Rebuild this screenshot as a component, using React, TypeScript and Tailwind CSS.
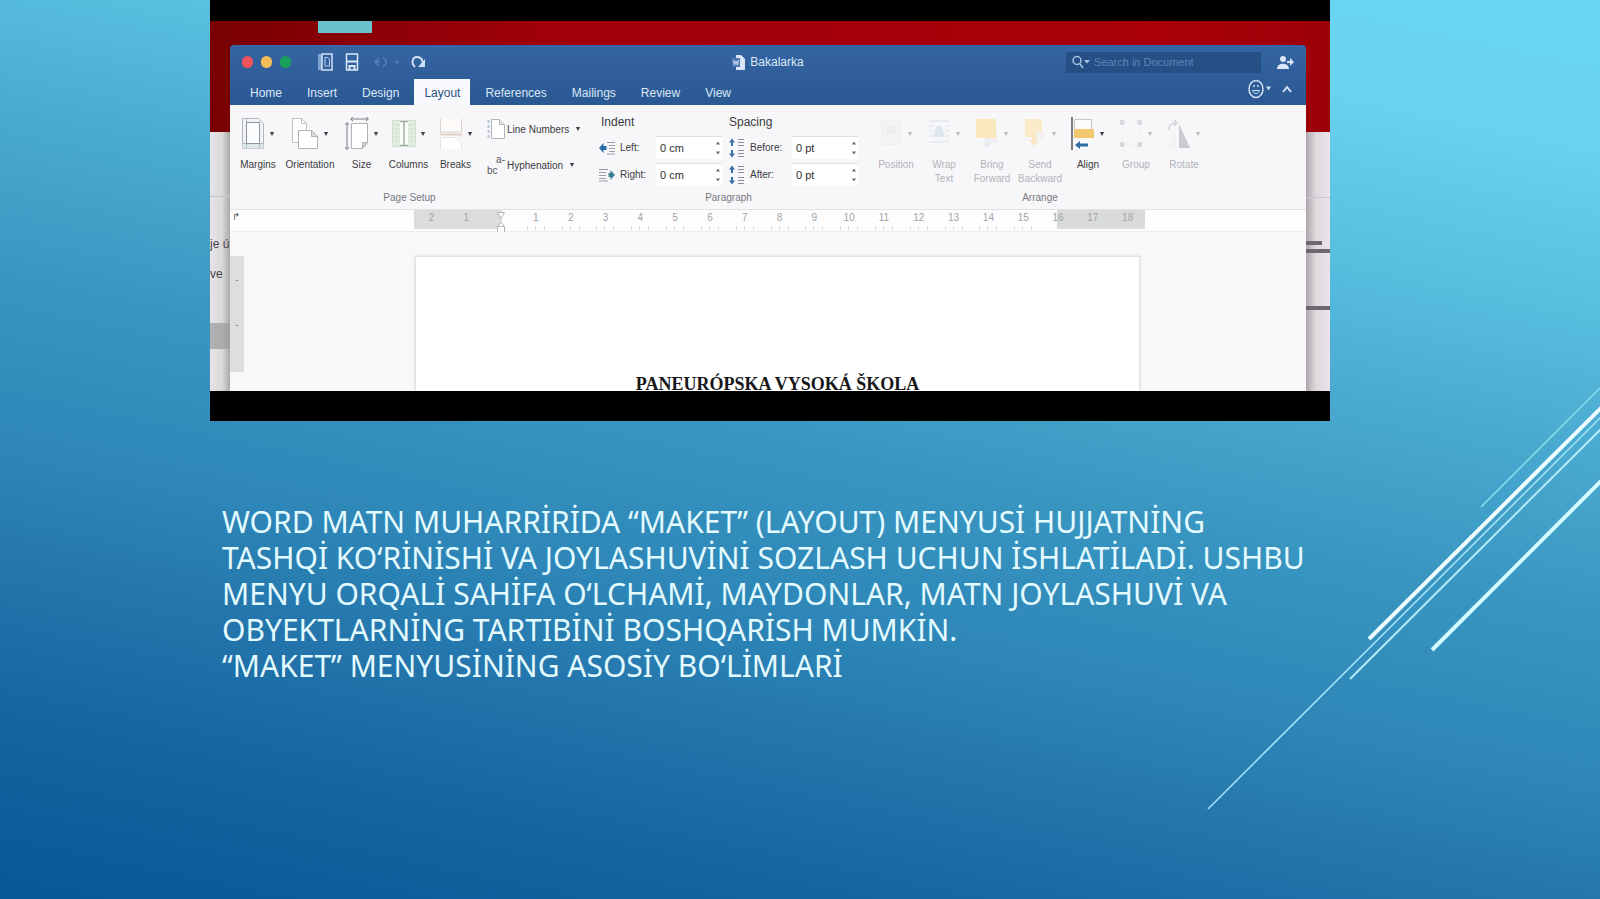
import React from "react";

const TABS = ["Home", "Insert", "Design", "Layout", "References", "Mailings", "Review", "View"];

const RULER = ["2", "1", "", "1", "2", "3", "4", "5", "6", "7", "8", "9", "10", "11", "12", "13", "14", "15", "16", "17", "18"];

function Caret({ faint = false }: { faint?: boolean }) {
  return (
    <svg viewBox="0 0 6 6" className={faint ? "h-[6px] w-[6px] text-[#bdbdc2]" : "h-[6px] w-[6px] text-[#44444a]"}>
      <path d="M0.8 1h4.4L3 5z" fill="currentColor" />
    </svg>
  );
}

function MarginsIcon() {
  return (
    <svg viewBox="0 0 24 33" className="h-[33px] w-6" fill="none">
      <path d="M1.5 1.5h16l5 5v25h-21z" fill="#f1f3f5" stroke="#b4b8bd" />
      <path d="M1.5 26.5h21v5h-21z" fill="#dfe7ea" />
      <path d="M5.5 1.5v30M18.5 4v27.5M1.5 26.5h21" stroke="#a9bdc4" />
      <path d="M5.5 5.5h13v21h-13z" fill="#fbfcfd" stroke="#8f949b" />
    </svg>
  );
}

function OrientationIcon() {
  return (
    <svg viewBox="0 0 28 33" className="h-[33px] w-7" fill="none">
      <path d="M1.5 1.5h9l5 5v19h-14z" fill="#fff" stroke="#c0c0c4" />
      <path d="M10.5 1.5v5h5" stroke="#c0c0c4" />
      <path d="M7.5 13.5h13l6 6v12h-19z" fill="#fff" stroke="#b0b0b5" />
      <path d="M20.5 13.5v6h6z" fill="#dcdce0" stroke="#b0b0b5" />
    </svg>
  );
}

function SizeIcon() {
  return (
    <svg viewBox="0 0 24 33" className="h-[33px] w-6" fill="none">
      <path d="M6.5 6.5h16v19l-5 6h-11z" fill="#fff" stroke="#b2b2b7" />
      <path d="M22.5 25.5h-5v6z" fill="#d4d4d8" stroke="#b2b2b7" />
      <path d="M6 2h17M2 6v26" stroke="#7b7f86" />
      <path d="M8 0L5.5 2 8 4M21 0l2.5 2L21 4M0 8l2-2.5L4 8M0 30l2 2.5L4 30" stroke="#7b7f86" />
    </svg>
  );
}

function ColumnsIcon() {
  return (
    <svg viewBox="0 0 24 33" className="h-[33px] w-6" fill="none">
      <path d="M0.5 3.5h23v26h-23z" fill="#e0ede0" stroke="#d0decf" />
      <path d="M8 3.5h8v26H8z" fill="#fbfdfb" />
      <path d="M12 5v23M8 4.5h8M8 28.5h8" stroke="#a3aea4" strokeWidth="1.5" />
      <path d="M3 8h4M3 12h4M3 16h4M3 20h4M3 24h4M17 8h4M17 12h4M17 16h4M17 20h4M17 24h4" stroke="#c8dac8" />
    </svg>
  );
}

function BreaksIcon() {
  return (
    <svg viewBox="0 0 24 33" className="h-[33px] w-6" fill="none">
      <path d="M1.5 2v13h21V2" fill="#fdfaf8" stroke="#d6d3d3" />
      <path d="M1.5 32V20.5h15l6 5V32" fill="#fff" stroke="#e6e4e4" />
      <path d="M1 17.5h22" stroke="#e3cfc4" strokeWidth="2" />
    </svg>
  );
}

function LineNumbersIcon() {
  return (
    <svg viewBox="0 0 18 22" className="h-[22px] w-[18px]" fill="none">
      <path d="M4.5 1.5h8l5 5v14h-13z" fill="#fff" stroke="#b4b5ba" />
      <path d="M12.5 1.5v5h5" fill="#e6e6ea" stroke="#b4b5ba" />
      <path d="M1.5 2v18" stroke="#b5c5d2" strokeWidth="2" strokeDasharray="3 2" />
    </svg>
  );
}

function HyphenationIcon() {
  return (
    <span className="grid h-[22px] w-[18px] grid-cols-1 text-[10px] leading-[11px] text-[#55555b]">
      <span className="text-right">a-</span>
      <span className="text-left">bc</span>
    </span>
  );
}

function IndentIcon({ side }: { side: "left" | "right" }) {
  return side === "left" ? (
    <svg viewBox="0 0 16 14" className="h-[14px] w-4" fill="none">
      <path d="M0 7l4.5-5v3h3v4h-3v3z" fill="#2b6cae" />
      <path d="M8 1.5h8M10 4.5h6M10 7.5h6M10 10.5h6M8 13h8" stroke="#9a9ea5" />
    </svg>
  ) : (
    <svg viewBox="0 0 16 14" className="h-[14px] w-4" fill="none">
      <path d="M16 7l-4.5-5v3h-2v4h2v3z" fill="#3c8096" />
      <path d="M0 1.5h9M0 4.5h7M0 7.5h7M0 10.5h7M0 13h9" stroke="#9a9ea5" />
    </svg>
  );
}

function SpacingIcon() {
  return (
    <svg viewBox="0 0 16 20" className="h-5 w-4" fill="none">
      <path d="M3 0.5L6 4.5H4V8H2V4.5H0z" fill="#3a6fa6" />
      <path d="M3 19.5L0 15.5h2V12h2v3.500h2z" fill="#3a6fa6" />
      <path d="M9 1.5h6M9 4.5h6M9 7.5h6M9 12.500h6M9 15.500h6M9 18.500h6" stroke="#8c9099" />
    </svg>
  );
}

function PositionIcon() {
  return (
    <svg viewBox="0 0 24 33" className="h-[33px] w-6" fill="none">
      <path d="M2.5 3.5h19v24h-19z" fill="#f3f3f4" stroke="#efeff1" />
      <path d="M8 9h8v8H8z" fill="#ededf0" />
    </svg>
  );
}

function WrapIcon() {
  return (
    <svg viewBox="0 0 24 33" className="h-[33px] w-6" fill="none">
      <path d="M2 4h20M2 9h4M18 9h4M2 14h4M18 14h4M2 19h4M18 19h4M2 25h20" stroke="#e9ecee" strokeWidth="2" />
      <path d="M7 20c0-15 10-15 10 0z" fill="#dde8ec" />
    </svg>
  );
}

function BringIcon() {
  return (
    <svg viewBox="0 0 24 33" className="h-[33px] w-6" fill="none">
      <path d="M9 14h14v12H9z" fill="#f1f1f2" />
      <path d="M1 2h20v19H1z" fill="#f9e9bd" />
      <path d="M12 31l-5-5h3v-4h4v4h3z" fill="#e8edf1" />
    </svg>
  );
}

function SendIcon() {
  return (
    <svg viewBox="0 0 24 33" className="h-[33px] w-6" fill="none">
      <path d="M2 2h17v18H2z" fill="#f9ebc6" />
      <path d="M13 14h8v8h-8z" fill="#f3f1ec" />
      <path d="M11 29l-5-6h3v-6h4v6h3z" fill="#f6e6c2" />
    </svg>
  );
}

function AlignIcon() {
  return (
    <svg viewBox="0 0 24 33" className="h-[33px] w-6" fill="none">
      <path d="M3.5 2.5h17v10h-17z" fill="#fbfbfc" stroke="#c6c7cb" />
      <path d="M3 12h20v9H3z" fill="#f2c970" />
      <path d="M1 0v33" stroke="#54545c" strokeWidth="1.5" />
      <path d="M4 28l5-4v2.5h8v3H9V32z" fill="#2e6ca4" />
    </svg>
  );
}

function GroupIcon() {
  return (
    <svg viewBox="0 0 26 33" className="h-[33px] w-6" fill="none">
      <path d="M3.5 4.5h19v24h-19z" stroke="#ebebee" strokeDasharray="2 2" />
      <path d="M1 2h5v5H1zM20 2h5v5h-5zM1 26h5v5H1zM20 26h5v5h-5z" fill="#d8d8dc" />
    </svg>
  );
}

function RotateIcon() {
  return (
    <svg viewBox="0 0 24 33" className="h-[33px] w-6" fill="none">
      <path d="M12 7v24h11z" fill="#cbcbcf" />
      <path d="M9 14v17H1z" fill="#f3f3f5" />
      <path d="M2 13c0-5 3-7 7-7M7 3l3 3-3 3" stroke="#d6d6da" strokeWidth="1.5" />
    </svg>
  );
}

function BigButton({ label, width, icon, faint = false }: { label: string; width: string; icon: React.ReactNode; faint?: boolean }) {
  return (
    <button type="button" className={`flex flex-col items-center ${width}`}>
      <span className="flex items-center gap-1">
        {icon}
        <Caret faint={faint} />
      </span>
      <span className={faint ? "mt-2 text-[10px] leading-[14px] text-[#b3b3b8]" : "mt-2 text-[10px] leading-[14px] text-[#3b3b40]"}>{label}</span>
    </button>
  );
}

function SmallButton({ label, icon }: { label: string; icon: React.ReactNode }) {
  return (
    <button type="button" className="flex h-6 items-center gap-[2px] text-[10px] text-[#3b3b40]">
      {icon}
      <span>{label}</span>
      <span className="pl-1">
        <Caret />
      </span>
    </button>
  );
}

function Stepper({ id, label, value, icon, labelWidth }: { id: string; label: string; value: string; icon: React.ReactNode; labelWidth: string }) {
  return (
    <div className="flex h-[27px] items-center">
      {icon}
      <label htmlFor={id} className={`ml-[5px] text-[10px] text-[#3b3b40] ${labelWidth}`}>
        {label}
      </label>
      <input id={id} defaultValue={value} className="h-[23px] w-[58px] border-t border-[#dedee2] bg-white pl-1 text-[11px] text-[#2e2e33] outline-none" />
      <span className="flex h-[23px] w-2 flex-col items-center justify-between border-t border-[#dedee2] bg-white py-1">
        <svg viewBox="0 0 4 4" className="h-1 w-1"><path d="M2 0.5L4 3.5H0z" fill="#66666c" /></svg>
        <svg viewBox="0 0 4 4" className="h-1 w-1"><path d="M2 3.5L0 0.5h4z" fill="#66666c" /></svg>
      </span>
    </div>
  );
}

function Group({ name, children }: { name: string; children: React.ReactNode }) {
  return (
    <section aria-label={name} className="flex h-full flex-col">
      <div className="flex h-[86px] items-start">{children}</div>
      <div className="text-center text-[10px] leading-[14px] text-[#77777d]">{name}</div>
    </section>
  );
}

function TitleBar() {
  return (
    <div className="grid h-[34px] grid-cols-[1fr_auto_1fr] items-center px-3">
      <div className="flex items-center">
        <div className="flex gap-2">
          <button type="button" aria-label="Close" className="h-3 w-[11px] rounded-full bg-[#f0525a]" />
          <button type="button" aria-label="Minimize" className="h-3 w-[11px] rounded-full bg-[#f3bd57]" />
          <button type="button" aria-label="Zoom" className="h-3 w-[11px] rounded-full bg-[#1aa05a]" />
        </div>
        <button type="button" aria-label="Sidebar" className="ml-[26px]">
          <svg viewBox="0 0 16 18" className="h-[18px] w-4" fill="none">
            <path d="M1 1h4v16H1z" fill="#7fa3d2" />
            <path d="M5 1h10v16H5z" stroke="#cfe0f4" strokeWidth="1.5" />
            <path d="M8 4.5h2.500l2 2V13H8z" stroke="#b9cfea" />
          </svg>
        </button>
        <button type="button" aria-label="Save" className="ml-3">
          <svg viewBox="0 0 14 18" className="h-[18px] w-[14px]" fill="none">
            <path d="M1.5 1h11v16h-11z" stroke="#dbe8f8" strokeWidth="1.5" />
            <path d="M1.5 8.5h11M4.5 17v-4h5v4" stroke="#dbe8f8" strokeWidth="2" />
          </svg>
        </button>
        <button type="button" aria-label="Undo" className="ml-[14px]">
          <svg viewBox="0 0 26 14" className="h-[14px] w-[26px]" fill="none" stroke="#5580b6" strokeWidth="1.5">
            <path d="M6 3L2 7l4 4M2 7h5M10 3c4 1 4 7 0 8M22 6l2 2 1.5-2" />
          </svg>
        </button>
        <button type="button" aria-label="Repeat" className="ml-3">
          <svg viewBox="0 0 15 14" className="h-[14px] w-[15px]" fill="none" stroke="#cfe0f4" strokeWidth="2">
            <path d="M4 12C0 9 1 2 6 2c4 0 6 3 6 8" />
            <path d="M14 4v8H7z" fill="#cfe0f4" stroke="none" />
          </svg>
        </button>
      </div>
      <div className="flex items-center gap-1 text-xs text-[#dce8f7]">
        <svg viewBox="0 0 14 17" className="h-[17px] w-[14px]" fill="none">
          <path d="M4 1h5l4 4v11H4z" fill="#dbe7f6" />
          <path d="M0 4h8v9H0z" fill="#4d79b2" />
          <path d="M1.5 6l1 5L4 7l1.5 4 1-5" stroke="#dbe7f6" />
        </svg>
        <h2>Bakalarka</h2>
      </div>
      <div className="flex items-center justify-end">
        <label className="flex h-[21px] w-[195px] items-center gap-1 bg-[#264f86] px-[6px]">
          <svg viewBox="0 0 18 14" className="h-[14px] w-[18px] shrink-0" fill="none">
            <circle cx="5" cy="5.5" r="4" stroke="#a9c3e4" strokeWidth="1.5" />
            <path d="M8 9l3 4" stroke="#a9c3e4" strokeWidth="1.5" />
            <path d="M12 5h6l-3 3.5z" fill="#a9c3e4" />
          </svg>
          <input aria-label="Search in Document" placeholder="Search in Document" className="min-w-0 flex-1 bg-transparent text-[11px] text-[#c9d9ee] outline-none placeholder:text-[#5f86b7]" />
        </label>
        <button type="button" aria-label="Share" className="ml-4">
          <svg viewBox="0 0 17 15" className="h-[15px] w-[17px]" fill="#dbe7f6">
            <circle cx="6" cy="4" r="3" />
            <path d="M0 14c0-7 12-7 12 0zM10 6h3V3l4 4-4 4V8h-3z" />
          </svg>
        </button>
      </div>
    </div>
  );
}

function TabRow() {
  return (
    <div className="flex h-[26px] items-stretch justify-between pl-[10px] pr-[14px]">
      <nav className="flex gap-[5px]">
        {TABS.map((tab) => (
          <button
            key={tab}
            type="button"
            className={tab === "Layout" ? "bg-[#f8f9fc] px-[10px] pt-[2px] text-xs text-[#2d4f80]" : "px-[10px] pt-[2px] text-xs text-[#dbe7f6]"}
          >
            {tab}
          </button>
        ))}
      </nav>
      <div className="flex items-start gap-[10px]">
        <button type="button" aria-label="Feedback">
          <svg viewBox="0 0 24 20" className="h-5 w-6" fill="none" stroke="#cfe0f4">
            <ellipse cx="8" cy="10" rx="7" ry="8.5" strokeWidth="1.5" />
            <path d="M4.5 11.5c1 4 6 4 7 0z" />
            <path d="M6 6v2M10 6v2" strokeWidth="1.5" />
            <path d="M18 7.5h5l-2.5 4z" fill="#cfe0f4" stroke="none" />
          </svg>
        </button>
        <button type="button" aria-label="Collapse ribbon" className="mt-[6px]">
          <svg viewBox="0 0 10 8" className="h-2 w-[10px]" fill="none" stroke="#cfe0f4" strokeWidth="2">
            <path d="M1 7l4-5 4 5" />
          </svg>
        </button>
      </div>
    </div>
  );
}

function Ribbon() {
  return (
    <div className="flex h-[105px] overflow-hidden border-b border-[#e2e2e6] bg-[#f7f7fa] pl-1">
      <Group name="Page Setup">
        <div className="flex pt-3">
          <BigButton label="Margins" width="w-12" icon={<MarginsIcon />} />
          <BigButton label="Orientation" width="w-14" icon={<OrientationIcon />} />
          <BigButton label="Size" width="w-[47px]" icon={<SizeIcon />} />
          <BigButton label="Columns" width="w-[47px]" icon={<ColumnsIcon />} />
          <BigButton label="Breaks" width="w-[47px]" icon={<BreaksIcon />} />
        </div>
        <div className="ml-2 flex w-[98px] flex-col gap-3 pt-3">
          <SmallButton label="Line Numbers" icon={<LineNumbersIcon />} />
          <SmallButton label="Hyphenation" icon={<HyphenationIcon />} />
        </div>
      </Group>
      <div className="ml-[14px]">
        <Group name="Paragraph">
          <fieldset className="pt-[9px]">
            <legend className="contents text-xs text-[#3b3b40]">
              <span className="block pl-[2px] text-xs leading-4">Indent</span>
            </legend>
            <div className="pt-1">
              <Stepper id="indent-left" label="Left:" value="0 cm" icon={<IndentIcon side="left" />} labelWidth="w-9" />
              <Stepper id="indent-right" label="Right:" value="0 cm" icon={<IndentIcon side="right" />} labelWidth="w-9" />
            </div>
          </fieldset>
          <fieldset className="ml-[7px] pt-[9px]">
            <legend className="contents text-xs text-[#3b3b40]">
              <span className="block text-xs leading-4">Spacing</span>
            </legend>
            <div className="pt-1">
              <Stepper id="space-before" label="Before:" value="0 pt" icon={<SpacingIcon />} labelWidth="w-[42px]" />
              <Stepper id="space-after" label="After:" value="0 pt" icon={<SpacingIcon />} labelWidth="w-[42px]" />
            </div>
          </fieldset>
        </Group>
      </div>
      <div className="ml-[14px]">
        <Group name="Arrange">
          <div className="flex items-start pt-3">
            <BigButton label="Position" width="w-12" icon={<PositionIcon />} faint />
            <BigButton label="Wrap Text" width="w-12 px-1" icon={<WrapIcon />} faint />
            <BigButton label="Bring Forward" width="w-12" icon={<BringIcon />} faint />
            <BigButton label="Send Backward" width="w-12" icon={<SendIcon />} faint />
            <BigButton label="Align" width="w-12" icon={<AlignIcon />} />
            <BigButton label="Group" width="w-12" icon={<GroupIcon />} faint />
            <BigButton label="Rotate" width="w-12" icon={<RotateIcon />} faint />
          </div>
        </Group>
      </div>
    </div>
  );
}

function Ruler() {
  return (
    <div className="flex h-[22px] items-start border-b border-[#ededf0] bg-[#fdfdfe]">
      <div className="w-[184px] pl-[2px] text-[10px] leading-[14px] text-[#66666c]">↱</div>
      <div className="flex h-[19px] w-[731px] bg-[linear-gradient(90deg,#dcdcdd_12%,#fdfdfe_12%_88%,#d9dbda_88%)]">
        {RULER.map((n, i) => (
          <div key={i} className="flex flex-1 flex-col items-center text-[10px] leading-4 text-[#a2a2a7]">
            {n === "" ? (
              <svg viewBox="0 0 10 24" className="h-6 w-[10px] shrink-0" fill="#fff" stroke="#b4b4b8">
                <path d="M1.5 2.5h7l-3.5 6zM1.5 16.5l3.5-4 3.5 4zM1.5 16.5h7v6h-7z" />
              </svg>
            ) : (
              n
            )}
            {i > 2 && i < 18 && (
              <svg viewBox="0 0 34 4" className="h-1 w-[34px] shrink-0" stroke="#dcdce0">
                <path d="M8.5 0v4M16.5 0v4M25.5 0v4" />
              </svg>
            )}
          </div>
        ))}
      </div>
    </div>
  );
}

function DocumentArea() {
  return (
    <div className="flex min-h-0 flex-1 bg-[#f9f7fa] pt-6">
      <div className="flex h-[116px] w-[14px] flex-col items-center gap-[37px] bg-[#dddedd] pt-5 text-[10px] leading-[8px] text-[#8a8a8f]">
        <span>-</span>
        <span>-</span>
      </div>
      <div className="ml-[171px] w-[725px] overflow-hidden border-x border-t border-[#e2e1e3] bg-white shadow-[0_0_3px_#d8d8da]">
        <h3 className="pt-[113px] text-center font-['Liberation_Serif',serif] text-lg font-bold whitespace-nowrap text-[#17171a]">
          PANEURÓPSKA VYSOKÁ ŠKOLA
        </h3>
      </div>
    </div>
  );
}

function LeftBackdrop() {
  return (
    <div className="w-5 overflow-hidden pt-[111px]">
      <div className="flex h-full flex-col bg-[linear-gradient(90deg,#e9e3e9,#d9d9d8_60%,#a9aaa8)] text-xs leading-4 text-[#4c4350]">
        <div className="h-[65px] shrink-0 border-b border-[#c4c4c4]" />
        <div className="mt-[39px] whitespace-nowrap">je ú</div>
        <div className="mt-[14px]">ve</div>
        <div className="mt-[41px] h-[26px] bg-[#98989a] opacity-70" />
      </div>
    </div>
  );
}

function RightBackdrop() {
  return (
    <div className="w-6 overflow-hidden pt-[111px]">
      <div className="flex h-full flex-col bg-[linear-gradient(90deg,#aaa6ab,#dcd9dc_40%,#ebe3ee)]">
        <div className="h-[66px] shrink-0 border-b border-[#c8c6ca]" />
        <div className="mt-[43px] h-1 w-4 bg-[#6d676f]" />
        <div className="mt-1 h-1 bg-[#6d676f]" />
        <div className="mt-[53px] h-1 bg-[#6d676f]" />
      </div>
    </div>
  );
}

function WordFigure() {
  return (
    <figure className="ml-[13.125%] w-[70%] overflow-hidden bg-black pt-[21px] pb-[30px]">
      <div className="relative flex h-[370px] bg-[linear-gradient(90deg,#780003,#a00009_30%,#a90009_85%,#9c0006)]">
        <div className="absolute top-0 left-[108px] h-3 w-[54px] bg-[#68c3cf]" />
        <LeftBackdrop />
        <div className="mt-6 flex min-w-0 flex-1 flex-col overflow-hidden rounded-t-[4px]">
          <header className="bg-[linear-gradient(180deg,#3565a2,#2a5893)]">
            <TitleBar />
            <TabRow />
          </header>
          <Ribbon />
          <Ruler />
          <DocumentArea />
        </div>
        <RightBackdrop />
      </div>
    </figure>
  );
}

function Streaks() {
  return (
    <svg viewBox="0 0 400 430" className="pointer-events-none absolute top-[385px] right-0 h-[430px] w-[400px]" fill="none">
      <path d="M281 122L402 1" stroke="#8fe0f2" strokeWidth="1.5" />
      <path d="M169 254L402 22" stroke="#ecfcff" strokeWidth="4" />
      <path d="M8 424L402 31" stroke="#a5e4f8" strokeWidth="1.5" />
      <path d="M150 294L402 43" stroke="#b4ecfa" strokeWidth="2" />
      <path d="M232 265L402 95" stroke="#d2fbfd" strokeWidth="4" />
    </svg>
  );
}

export default function App() {
  return (
    <main className="relative min-h-screen overflow-hidden bg-[linear-gradient(192deg,#68d7f3_0%,#69d2ef_12%,#58bfdf_25%,#4aabd0_36%,#3895c0_50%,#2d86b7_64%,#2476ac_73%,#1466a0_85%,#065896_100%)] font-['Liberation_Sans',Arial,sans-serif]">
      <WordFigure />
      <Streaks />
      <p className="mt-[83px] ml-[222px] w-[1096px] max-w-full font-['Noto_Sans',sans-serif] text-[30px] leading-9 text-[#e3faff]">
        WORD MATN MUHARRİRİDA “MAKET” (LAYOUT) MENYUSİ HUJJATNİNG TASHQİ KO‘RİNİSHİ VA JOYLASHUVİNİ SOZLASH UCHUN İSHLATİLADİ. USHBU MENYU ORQALİ SAHİFA O‘LCHAMİ, MAYDONLAR, MATN JOYLASHUVİ VA OBYEKTLARNİNG TARTIBİNİ BOSHQARİSH MUMKİN.
        <br />
        “MAKET” MENYUSİNİNG ASOSİY BO‘LİMLARİ
      </p>
    </main>
  );
}
